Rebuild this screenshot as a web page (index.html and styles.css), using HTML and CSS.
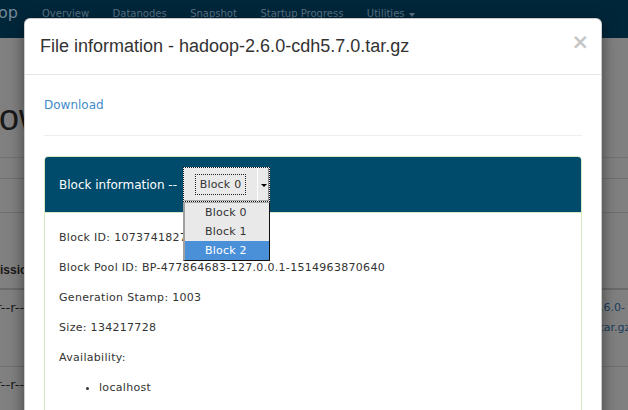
FILE: index.html
```html
<!DOCTYPE html>
<html lang="en">
<head>
<meta charset="utf-8">
<title>Browse Directory</title>
<link rel="stylesheet" href="styles.css">
</head>
<body>
<div class="page">
  <nav class="navbar">
    <div class="brand"><span>Hadoop</span></div>
    <ul class="nav">
      <li>Overview</li>
      <li>Datanodes</li>
      <li>Snapshot</li>
      <li>Startup Progress</li>
      <li class="dropdown">Utilities <span class="nav-caret"></span></li>
    </ul>
  </nav>
  <div class="content">
    <h1 class="page-title">Browse Directory</h1>
    <div class="toolbar"></div>
    <div class="search"></div>
    <div class="table">
      <div class="thead">
        <div class="c-perm">Permission</div>
        <div class="c-name"></div>
      </div>
      <div class="trow first">
        <div class="c-perm">-rw-r--r--</div>
        <div class="c-name link">hadoop-2.6.0-<br>cdh5.7.0.tar.gz</div>
      </div>
      <div class="trow">
        <div class="c-perm">-rw-r--r--</div>
        <div class="c-name"></div>
      </div>
    </div>
  </div>
</div>

<div class="modal">
  <div class="modal-header">
    <h4 class="modal-title">File information - hadoop-2.6.0-cdh5.7.0.tar.gz</h4>
    <span class="close">&times;</span>
  </div>
  <div class="modal-body">
    <div class="download"><a class="download-link">Download</a></div>
    <hr class="divider">
    <div class="panel">
      <div class="panel-heading">
        <span class="heading-text">Block information --</span>
        <div class="select-wrap">
          <div class="select">
            <div class="select-value"><span class="select-focus">Block 0</span></div>
            <div class="select-arrow"><span class="arrow"></span></div>
          </div>
          <ul class="select-list">
            <li class="opt">Block 0</li>
            <li class="opt">Block 1</li>
            <li class="opt active">Block 2</li>
          </ul>
        </div>
      </div>
      <div class="panel-body">
        <p>Block ID: 1073741827</p>
        <p>Block Pool ID: BP-477864683-127.0.0.1-1514963870640</p>
        <p>Generation Stamp: 1003</p>
        <p>Size: 134217728</p>
        <p>Availability:</p>
        <ul class="hosts">
          <li>localhost</li>
        </ul>
      </div>
    </div>
  </div>
</div>
</body>
</html>
```
FILE: styles.css
```css
html, body {
  margin: 0;
  padding: 0;
}
body {
  width: 628px;
  height: 410px;
  overflow: hidden;
  position: relative;
  background: #808080;
  font-family: "DejaVu Sans", Verdana, sans-serif;
  font-size: 11px;
  color: #333;
}

/* ---------- dimmed page behind the modal ---------- */
.page {
  width: 628px;
}
.navbar {
  height: 38px;
  background: #00263a;
  display: flex;
  align-items: flex-start;
}
.brand {
  width: 18px;
  overflow: hidden;
  display: flex;
  justify-content: flex-end;
  white-space: nowrap;
  font-size: 16px;
  line-height: 20px;
  padding-top: 3px;
  color: #74899a;
}
.nav {
  list-style: none;
  margin: 0 0 0 24px;
  padding: 4px 0 0;
  display: flex;
  gap: 23.5px;
  font-size: 10px;
  line-height: 20px;
  color: #5a7184;
  white-space: nowrap;
}
.dropdown {
  display: flex;
  align-items: center;
  gap: 4px;
}
.nav-caret {
  width: 0;
  height: 0;
  border-left: 3px solid transparent;
  border-right: 3px solid transparent;
  border-top: 4px solid #5a7184;
  margin-top: 2px;
}

.content {
  color: #1a1a1a;
}
.page-title {
  margin: 60px 0 0 -37px;
  font-family: "Liberation Sans", Arial, sans-serif;
  font-weight: normal;
  font-size: 36px;
  line-height: 40px;
  color: #191919;
  white-space: nowrap;
}
.toolbar {
  margin-top: 19px;
  height: 20px;
  border-top: 1px solid #727272;
  border-bottom: 1px solid #6f6f6f;
}
.search {
  height: 33px;
  border-bottom: 1px solid #6f6f6f;
}
.table {
  margin-left: -30px;
}
.thead, .trow {
  display: grid;
  grid-template-columns: 578px 1fr;
}
.thead {
  height: 75px;
  align-items: end;
  border-bottom: 2px solid #6b6b6b;
}
.thead .c-perm {
  font-family: "Liberation Sans", Arial, sans-serif;
  font-weight: bold;
  font-size: 12px;
  line-height: 20px;
  padding-bottom: 8px;
  color: #1a1a1a;
}
.trow {
  line-height: 20px;
  padding-top: 8px;
  height: 68px;
  border-bottom: 1px solid #6f6f6f;
}
.trow .c-perm {
  padding-left: 1px;
  color: #1a1a1a;
  font-size: 13px;
}
.link {
  color: #1b3d5c;
  white-space: nowrap;
}

/* ---------- modal ---------- */
.modal {
  position: absolute;
  top: 18px;
  left: 24px;
  width: 578px;
  height: 460px;
  box-sizing: border-box;
  background: #fff;
  border: 1px solid rgba(0, 0, 0, 0.2);
  border-radius: 6px;
  box-shadow: 0 5px 15px rgba(0, 0, 0, 0.5);
}
.modal-header {
  padding: 15px;
  border-bottom: 1px solid #e5e5e5;
  display: flex;
  justify-content: space-between;
  align-items: flex-start;
}
.modal-title {
  margin: 0;
  font-family: "Liberation Sans", Arial, sans-serif;
  font-weight: normal;
  font-size: 18px;
  line-height: 25px;
  color: #333;
}
.close {
  margin-top: -2px;
  margin-right: -3px;
  font-family: "DejaVu Sans", sans-serif;
  font-weight: bold;
  font-size: 21px;
  line-height: 1;
  color: #c6c6c6;
}
.modal-body {
  padding: 20px 19px;
}
.download {
  font-size: 12px;
  line-height: 20px;
}
.download-link {
  color: #428bca;
  text-decoration: none;
}
.divider {
  margin: 20px 0;
  border: 0;
  border-top: 1px solid #eee;
  height: 0;
}

.panel {
  border: 1px solid #d6e9c6;
  border-radius: 4px;
}
.panel-heading {
  background: #004b6c;
  color: #fff;
  padding: 10px 14px;
  border-bottom: 1px solid #d6e9c6;
  border-radius: 3px 3px 0 0;
  display: flex;
  align-items: center;
  gap: 6px;
  font-size: 12px;
  line-height: 20px;
}
.heading-text {
  white-space: nowrap;
}
.select-wrap {
  position: relative;
}
.select {
  width: 87px;
  height: 35px;
  box-sizing: border-box;
  display: flex;
  border: 1px dotted #1a1a1a;
  background: #e9e9e9;
  box-shadow: inset -1px -1px 0 #a9a9a9;
  color: #333;
  font-size: 11px;
}
.select-value {
  flex: 1;
  display: flex;
  align-items: center;
  justify-content: center;
}
.select-focus {
  border: 1px dotted #222;
  padding: 0 4px;
  line-height: 19px;
  letter-spacing: 0.2px;
}
.select-arrow {
  width: 11px;
  border-left: 1px solid #fff;
  display: flex;
  align-items: center;
  justify-content: center;
  box-shadow: inset -1px 0 0 #8a8a8a;
}
.arrow {
  width: 0;
  height: 0;
  border-left: 3px solid transparent;
  border-right: 3px solid transparent;
  border-top: 3px solid #000;
  margin-top: 1px;
}
.select-list {
  position: absolute;
  top: 35px;
  left: 0;
  width: 87px;
  box-sizing: border-box;
  margin: 0;
  padding: 0;
  list-style: none;
  background: #e9e9e9;
  border-top: 1px solid #a8a8a8;
  border-left: 2px solid #a0a0a0;
  border-right: 1px solid #111;
  border-bottom: 1px solid #111;
  color: #333;
  font-size: 11px;
  letter-spacing: 0.2px;
}
.opt {
  height: 19px;
  line-height: 19px;
  padding-left: 20px;
}
.opt.active {
  background: #4a90d9;
  color: #fff;
}

.panel-body {
  padding: 15px 14px;
  letter-spacing: 0.3px;
}
.panel-body p {
  margin: 0 0 10px;
  line-height: 20px;
  font-size: 11px;
  white-space: nowrap;
}
.hosts {
  margin: 0 0 10px;
  padding-left: 40px;
  line-height: 20px;
}
```
